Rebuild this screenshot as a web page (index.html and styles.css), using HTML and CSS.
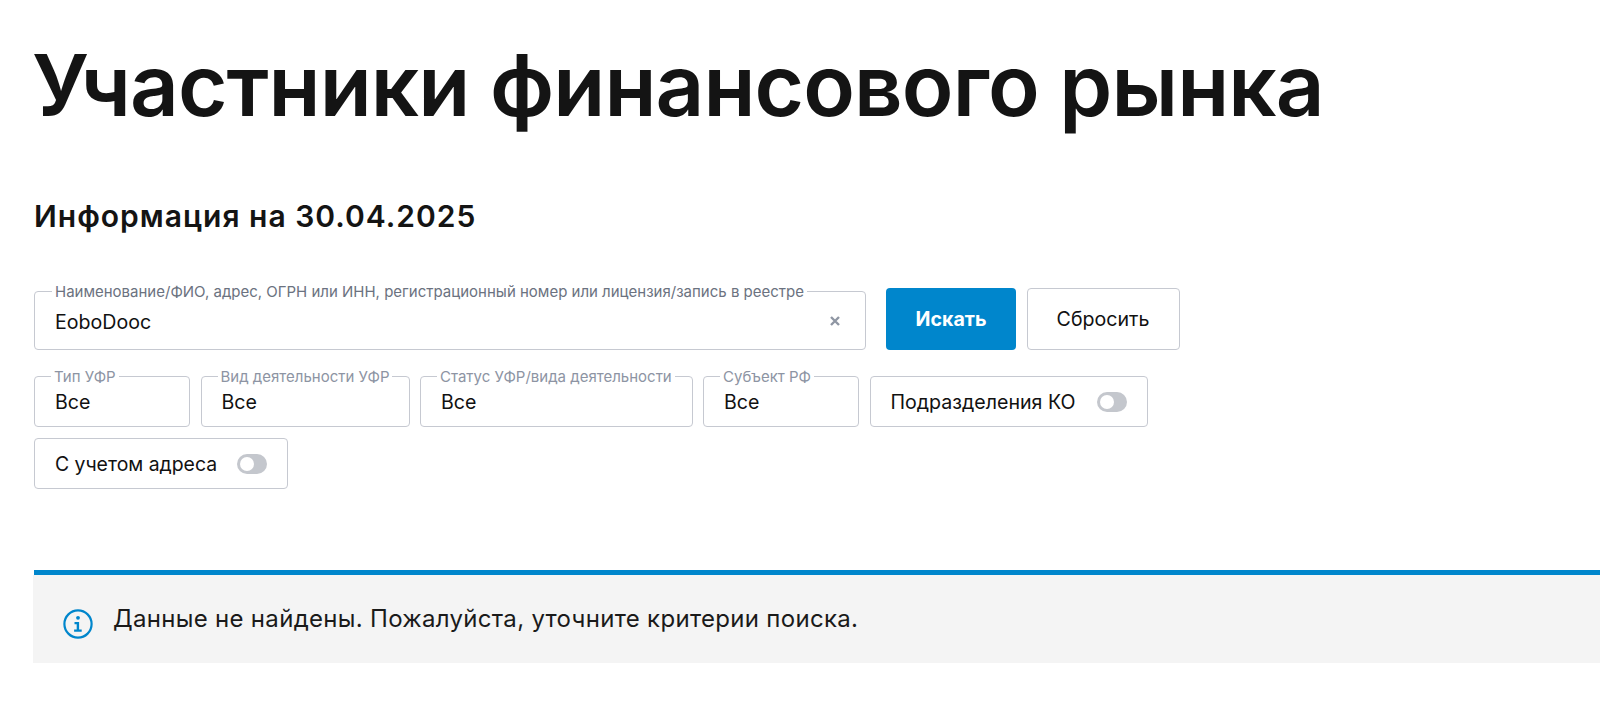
FILE: index.html
```html
<!DOCTYPE html>
<html lang="ru">
<head>
<meta charset="utf-8">
<title>Участники финансового рынка</title>
<link rel="stylesheet" href="styles.css">
</head>
<body>
<main class="page">
  <h1 class="title">Участники финансового рынка</h1>
  <h2 class="subtitle">Информация на 30.04.2025</h2>
  <form class="filters">
    <div class="row row-search">
      <div class="field field-search">
        <span class="legend">Наименование/ФИО, адрес, ОГРН или ИНН, регистрационный номер или лицензия/запись в реестре</span>
        <span class="value">EoboDooc</span>
        <svg class="clear" width="10" height="10" viewBox="0 0 10 10"><path d="M1 1l8 8M9 1l-8 8" stroke="#8f96a3" stroke-width="2.4" fill="none"/></svg>
      </div>
      <button class="btn btn-primary" type="button">Искать</button>
      <button class="btn btn-plain" type="button">Сбросить</button>
    </div>
    <div class="row row-select">
      <div class="field w-type"><span class="legend legend-light">Тип УФР</span><span class="value">Все</span></div>
      <div class="field w-kind"><span class="legend legend-light">Вид деятельности УФР</span><span class="value">Все</span></div>
      <div class="field w-status"><span class="legend legend-light">Статус УФР/вида деятельности</span><span class="value">Все</span></div>
      <div class="field w-type"><span class="legend legend-light">Субъект РФ</span><span class="value">Все</span></div>
      <div class="toggle-box"><span class="value">Подразделения КО</span><span class="toggle"></span></div>
    </div>
    <div class="row row-select">
      <div class="toggle-box toggle-box-address"><span class="value">С учетом адреса</span><span class="toggle"></span></div>
    </div>
  </form>
  <div class="notice-bar"></div>
  <div class="notice">
    <svg class="notice-icon" width="30" height="30" viewBox="0 0 30 30"><circle cx="15" cy="15" r="13.6" fill="none" stroke="#0086cc" stroke-width="2.2"/><circle cx="15" cy="8.8" r="1.9" fill="#0086cc"/><path d="M11.5 13h4.6v7.6h2.6v2.2h-7.6v-2.2h2.6v-5.4h-2.2z" fill="#0086cc"/></svg>
    <span class="notice-text">Данные не найдены. Пожалуйста, уточните критерии поиска.</span>
  </div>
</main>
</body>
</html>
```
FILE: styles.css
```css
* { box-sizing: border-box; }
html, body { margin: 0; padding: 0; background: #fff; }
body { font-family: Inter, "Noto Sans", sans-serif; color: #111; overflow: hidden; }
.page { padding: 36px 0 0 34px; height: 703px; }
.title { margin: 0 0 0 -2px; font-size: 85px; line-height: 100px; font-weight: 600; letter-spacing: -0.9px; color: #141414; }
.subtitle { margin: 60px 0 0; font-size: 30px; line-height: 40px; font-weight: 600; letter-spacing: 1px; color: #141414; }
.filters { margin-top: 52px; }
.row { display: flex; gap: 10.5px; }
.row-search { gap: 20px; height: 62px; align-items: flex-end; }
.row-search .btn + .btn { margin-left: -9.5px; }
.row-select { margin-top: 11px; height: 51px; }
.row-search + .row-select { margin-top: 26px; }
.field { position: relative; display: flex; align-items: center; height: 51px; padding: 1px 20px 0; border: 1px solid #c6c9d1; border-radius: 4px; background: #fff; }
.field-search { width: 832px; height: 59px; padding-top: 3px; }
.w-type { width: 156px; }
.w-kind { width: 209px; }
.w-status { width: 272.5px; }
.legend { position: absolute; left: 17px; top: -9px; padding: 0 3px; font-size: 15px; line-height: 17px; background: #fff; color: #6b7280; white-space: nowrap; }
.legend-light { left: 16px; color: #8d94a3; }
.value { font-size: 19.6px; line-height: 24px; color: #111; }
.clear { position: absolute; right: 25px; top: 24px; }
.btn { height: 62px; border-radius: 4px; font: 400 19.6px Inter, sans-serif; cursor: pointer; }
.btn-primary { width: 130px; border: 0; background: #0086cc; color: #fff; font-weight: 700; }
.btn-plain { width: 153px; border: 1px solid #c6c9d1; background: #fff; color: #111; }
.toggle-box { display: flex; align-items: center; gap: 22px; height: 51px; padding: 0 20px; border: 1px solid #c6c9d1; border-radius: 4px; }
.toggle-box-address { gap: 20px; }
.toggle-box-address .value { font-size: 19.4px; }
.toggle { position: relative; width: 30px; height: 20px; border-radius: 10px; background: #c4c7cd; }
.toggle::after { content: ""; position: absolute; left: 3px; top: 3px; width: 14px; height: 14px; border-radius: 50%; background: #fff; }
.notice-bar { margin-top: 81px; height: 5px; background: #0086cc; }
.notice { display: flex; align-items: center; gap: 20px; margin-left: -1px; height: 88px; padding: 0 0 0 30px; background: #f4f4f4; }
.notice-text { font-size: 24px; line-height: 30px; letter-spacing: 0.3px; color: #1a1a1a; }
.notice-icon { flex: none; margin-top: 10px; }
```
